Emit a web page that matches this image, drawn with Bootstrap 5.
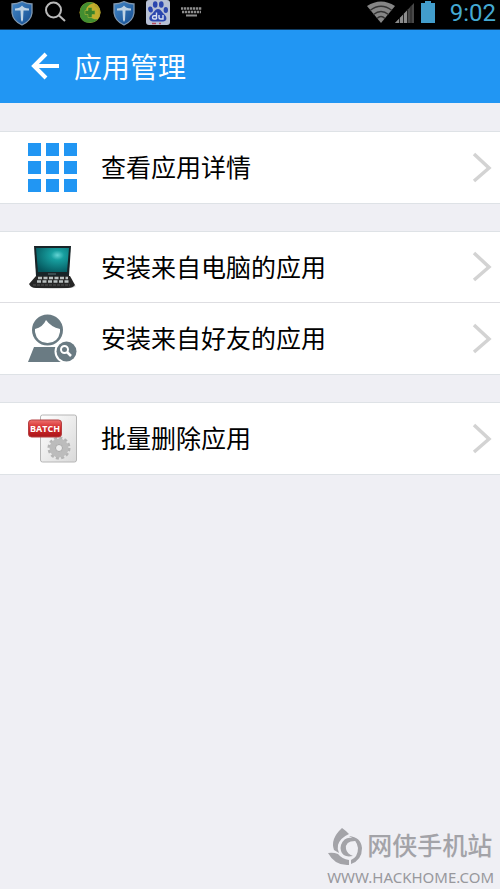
<!DOCTYPE html>
<html lang="zh-CN">
<head>
<meta charset="utf-8">
<meta name="viewport" content="width=device-width, initial-scale=1">
<title>应用管理</title>
<link href="https://cdn.jsdelivr.net/npm/bootstrap@5.3.0/dist/css/bootstrap.min.css" rel="stylesheet">
<style>
  body { font-family: "Roboto", "Noto Sans CJK SC", sans-serif; background: #efeff4; color: #000; }
  svg { display: block; flex: none; }
  .status-bar { height: 30px; padding: 0 4px 4px 10px; background: #000; border-bottom: 1px solid #103c62; }
  .status-left { gap: 10px; }
  .clock { font-size: 24px; line-height: 24px; color: #45a9d2; }
  .app-header { height: 73px; padding: 0 28px; gap: 12px; background: #2196f3; color: #fff; }
  .app-title { padding-top: 4px; font-size: 28px; line-height: 40px; font-weight: 400; }
  .menu-groups { gap: 27px; padding: 28px 0; }
  .menu-row { height: 71px; padding: 0 8px 0 28px; gap: 24px; font-size: 25px; line-height: 36px; color: #000; border-color: #dedee2; }
  .menu-row:hover { color: #000; }
  .menu-label { padding-top: 3px; }
  .site-mark { padding: 0 6px 2px; color: #a3a3a8; }
  .site-name { font-size: 25px; line-height: 36px; font-weight: 500; }
  .site-url { font-family: "Noto Sans", sans-serif; font-size: 15px; line-height: 20px; color: #98989d; }
</style>
<script src="https://cdn.jsdelivr.net/npm/bootstrap@5.3.0/dist/js/bootstrap.bundle.min.js" defer></script>
</head>
<body>
<svg width="0" height="0" class="position-absolute" aria-hidden="true">
  <defs>
    <linearGradient id="shieldBlue" x1="0" y1="0" x2="1" y2="1"><stop offset="0" stop-color="#4488c8"/><stop offset="1" stop-color="#144c8f"/></linearGradient>
    <symbol id="shield" viewBox="0 0 24 26">
      <path d="M12 1.500Q7 4 2 4V13Q3 21 12 25Q21 21 22 13V4Q17 4 12 1.500Z" fill="url(#shieldBlue)" stroke="#8299b0" stroke-width="1.300"/>
      <path d="M5 8.500Q10 8.500 12 5.500Q14 8.500 19 8.500V10.500H13.500L13 20L12 22L11 20L10.500 10.500H5Z" fill="#bfd3e4"/>
    </symbol>
    <symbol id="chevron" viewBox="0 0 20 32"><path d="M2 2L17 16L2 29" fill="none" stroke="#d3d3d3" stroke-width="3.500"/></symbol>
  </defs>
</svg>
<div class="d-flex flex-column min-vh-100">
  <div class="status-bar d-flex align-items-center justify-content-between">
    <div class="status-left d-flex align-items-center">
      <svg width="24" height="26"><use href="#shield"/></svg>
      <svg width="24" height="24" viewBox="0 0 24 24" fill="none" stroke="#b9b9b9" stroke-width="2"><circle cx="9.500" cy="9" r="7.500"/><path d="M15 14.500L21 20"/></svg>
      <svg width="24" height="24" viewBox="0 0 24 24">
        <circle cx="12" cy="11.500" r="10.500" fill="#c4ad2c"/>
        <path d="M2 9C4 2 10 0 16 2C9 4 7 8 9 12C11 17 16 19 20 18C15 24 4 23 2 15Z" fill="#438e31"/>
        <path d="M18 3C23 7 24 12 20 18C22 12 21 7 16 5Z" fill="#b3a42c"/>
        <path d="M10 6.500H14V9.500H17V13.500H14V16.500H10V13.500H7V9.500H10Z" fill="#3b812a" stroke="#a9b735" stroke-width=".6"/>
      </svg>
      <svg width="24" height="26"><use href="#shield"/></svg>
      <svg width="24" height="26" viewBox="0 0 24 26">
        <rect width="24" height="25" y="0" rx="3" fill="#b7c0d4"/>
        <g fill="#2b46ae"><ellipse cx="4.500" cy="9.500" rx="2.300" ry="3" transform="rotate(-15 4.500 9.500)"/><ellipse cx="9.200" cy="4.500" rx="2.300" ry="3.200"/><ellipse cx="15.300" cy="4.500" rx="2.300" ry="3.200"/><ellipse cx="19.800" cy="10" rx="2.200" ry="3"/><path d="M12 9C9 9 8 12.500 5.500 14.500C1.500 17.500 3.500 22 7.500 21.500H17C21 21.500 21.500 17.500 18.500 14.500C16 12.500 15 9 12 9Z"/></g>
        <path d="M10.500 12.500V19M10.500 15.800H8Q6.500 15.800 6.500 17.500Q6.500 19 8 19H10.500M13 15V17.500Q13 19 14.500 19H17V15" stroke="#d6dff1" stroke-width="1.400" fill="none"/>
        <path d="M6 23.500H10M13 23.500H15" stroke="#b5485c" stroke-width="1.500"/>
      </svg>
      <svg width="24" height="24" viewBox="0 0 24 24" fill="none" stroke="#8d8d8d" stroke-width="2.500"><path d="M1 7.500H22M2 11H21" stroke-dasharray="2.300 .7"/><path d="M6 14.500H17" stroke-width="2"/></svg>
    </div>
    <div class="d-flex align-items-center">
      <svg width="28" height="24" viewBox="0 0 28 24">
        <path d="M0 5Q14-4 28 5L14 22Z" fill="#858585"/>
        <path d="M3 9.500Q14 1 25 9.500M6.500 13.500Q14 7.500 21.500 13.500M10 17.500Q14 13.500 18 17.500" fill="none" stroke="#333" stroke-width="1.300"/>
      </svg>
      <svg width="20" height="24" viewBox="0 0 20 24"><path d="M0 22L19 2V22Z" fill="#484848"/><path d="M0 22L13 8.500V22Z" fill="#8b8b8b"/><path d="M4.500 17V22M8.500 13V22M12.500 9V22M16 5V22" stroke="#222"/></svg>
      <svg width="35" height="24" viewBox="0 0 35 24"><path d="M6 2H10V0H16V2H20V22H6Z" fill="#429dcc"/></svg>
      <span class="clock">9:02</span>
    </div>
  </div>

  <header class="app-header d-flex align-items-center">
    <a href="#" aria-label="返回">
      <svg width="34" height="32" viewBox="0 0 34 32" fill="none" stroke="#fff" stroke-width="4"><path d="M18 3L6 15L18 27M6 15H31"/></svg>
    </a>
    <h1 class="app-title mb-0">应用管理</h1>
  </header>

  <main class="menu-groups d-flex flex-column">
    <nav class="list-group list-group-flush border-top border-bottom">
      <a href="#" class="menu-row list-group-item list-group-item-action d-flex align-items-center">
        <svg width="49" height="49" viewBox="0 0 49 49" fill="#2196f3"><path d="M0 0H13V13H0ZM18 0H31V13H18ZM36 0H49V13H36ZM0 18H13V31H0ZM18 18H31V31H18ZM36 18H49V31H36ZM0 36H13V49H0ZM18 36H31V49H18ZM36 36H49V49H36Z"/></svg>
        <span class="menu-label flex-grow-1">查看应用详情</span>
        <svg width="20" height="32"><use href="#chevron"/></svg>
      </a>
    </nav>

    <nav class="list-group list-group-flush border-top border-bottom">
      <a href="#" class="menu-row list-group-item list-group-item-action d-flex align-items-center">
        <svg width="49" height="49" viewBox="0 0 49 49">
          <defs><radialGradient id="screenGlow" cx=".65" cy=".3" r=".8"><stop offset="0" stop-color="#64d4d4"/><stop offset=".25" stop-color="#179f9f"/><stop offset="1" stop-color="#04545b"/></radialGradient></defs>
          <ellipse cx="25" cy="43" rx="23" ry="3" fill="#ddd"/>
          <path d="M6 3H43L41 33H8Z" fill="#182428"/>
          <path d="M8 5H41L39 29H10Z" fill="url(#screenGlow)"/>
          <path d="M8 33H42L47 42Q45 45 40 45H8Q3 45 1 41Z" fill="#262626"/>
          <path d="M10 35H40M9 38.500H41" stroke="#b9c0c0" stroke-width="2.500" stroke-dasharray="4 1.500"/>
          <path d="M5 42H42" stroke="#555" stroke-dasharray="3 1"/>
          <path d="M20 31H28" stroke="#5e7376"/>
        </svg>
        <span class="menu-label flex-grow-1">安装来自电脑的应用</span>
        <svg width="20" height="32"><use href="#chevron"/></svg>
      </a>
      <a href="#" class="menu-row list-group-item list-group-item-action d-flex align-items-center">
        <svg width="49" height="49" viewBox="0 0 49 49">
          <circle cx="19.500" cy="16" r="15.500" fill="#6a7b83"/>
          <path d="M7 15Q15 13 18 6Q23 13 32 15V18Q30 29 19.500 29Q9 29 7 18Z" fill="#fff"/>
          <path d="M6 33H33V48H0Z" fill="#6a7b83"/>
          <circle cx="38.500" cy="37.500" r="12" fill="#fff"/>
          <circle cx="38.500" cy="37.500" r="10" fill="#6a7b83"/>
          <circle cx="36.500" cy="35.500" r="3.500" fill="none" stroke="#fff" stroke-width="2"/><path d="M39 38L43 42" stroke="#fff" stroke-width="2.500"/>
        </svg>
        <span class="menu-label flex-grow-1">安装来自好友的应用</span>
        <svg width="20" height="32"><use href="#chevron"/></svg>
      </a>
    </nav>

    <nav class="list-group list-group-flush border-top border-bottom">
      <a href="#" class="menu-row list-group-item list-group-item-action d-flex align-items-center">
        <svg width="49" height="49" viewBox="0 0 49 49">
          <defs>
            <linearGradient id="pageGrey" x2="1" y2="1"><stop stop-color="#fff"/><stop offset="1" stop-color="#d9d9d9"/></linearGradient>
            <linearGradient id="tagRed" x2="0" y2="1"><stop stop-color="#ee716e"/><stop offset=".45" stop-color="#d42b2c"/><stop offset="1" stop-color="#a91418"/></linearGradient>
          </defs>
          <rect x="12.500" y="1" width="36" height="47" rx="2" fill="url(#pageGrey)" stroke="#b6b6b6"/>
          <circle cx="31" cy="34" r="10" fill="none" stroke="#b4b4b4" stroke-width="3" stroke-dasharray="3 2.230"/>
          <circle cx="31" cy="34" r="6.500" fill="none" stroke="#bcbcbc" stroke-width="6"/>
          <circle cx="31" cy="34" r="3.500" fill="#eee" stroke="#a5a5a5"/>
          <rect x=".5" y="6" width="33" height="17" rx="3" fill="url(#tagRed)" stroke="#b44143"/>
          <text x="17" y="18" text-anchor="middle" font-family="Open Sans, sans-serif" font-size="9" font-weight="700" fill="#fff">BATCH</text>
        </svg>
        <span class="menu-label flex-grow-1">批量删除应用</span>
        <svg width="20" height="32"><use href="#chevron"/></svg>
      </a>
    </nav>
  </main>

  <footer class="site-mark mt-auto align-self-end">
    <div class="d-flex align-items-center gap-1">
      <svg width="36" height="40" viewBox="0 0 36 40" fill="#a3a3a8">
        <path d="M15 1Q18 3 22 7Q13 11 11 18Q10 22 12 26L7 23Q3 12 15 1Z"/>
        <path d="M1 26Q6 25 11 27Q15 32 22 33V38Q8 39 1 26Z"/>
        <path d="M22 9Q34 10 35 21Q35 33 24 37V33Q31 30 31 21Q30 13 22 9Z"/>
        <path d="M14 18Q18 8 28 12V14Q18 14 19 22Q20 27 26 29Q16 31 14 24Q13 21 14 18Z"/>
      </svg>
      <span class="site-name">网侠手机站</span>
    </div>
    <div class="site-url text-end">WWW.HACKHOME.COM</div>
  </footer>
</div>
</body>
</html>
